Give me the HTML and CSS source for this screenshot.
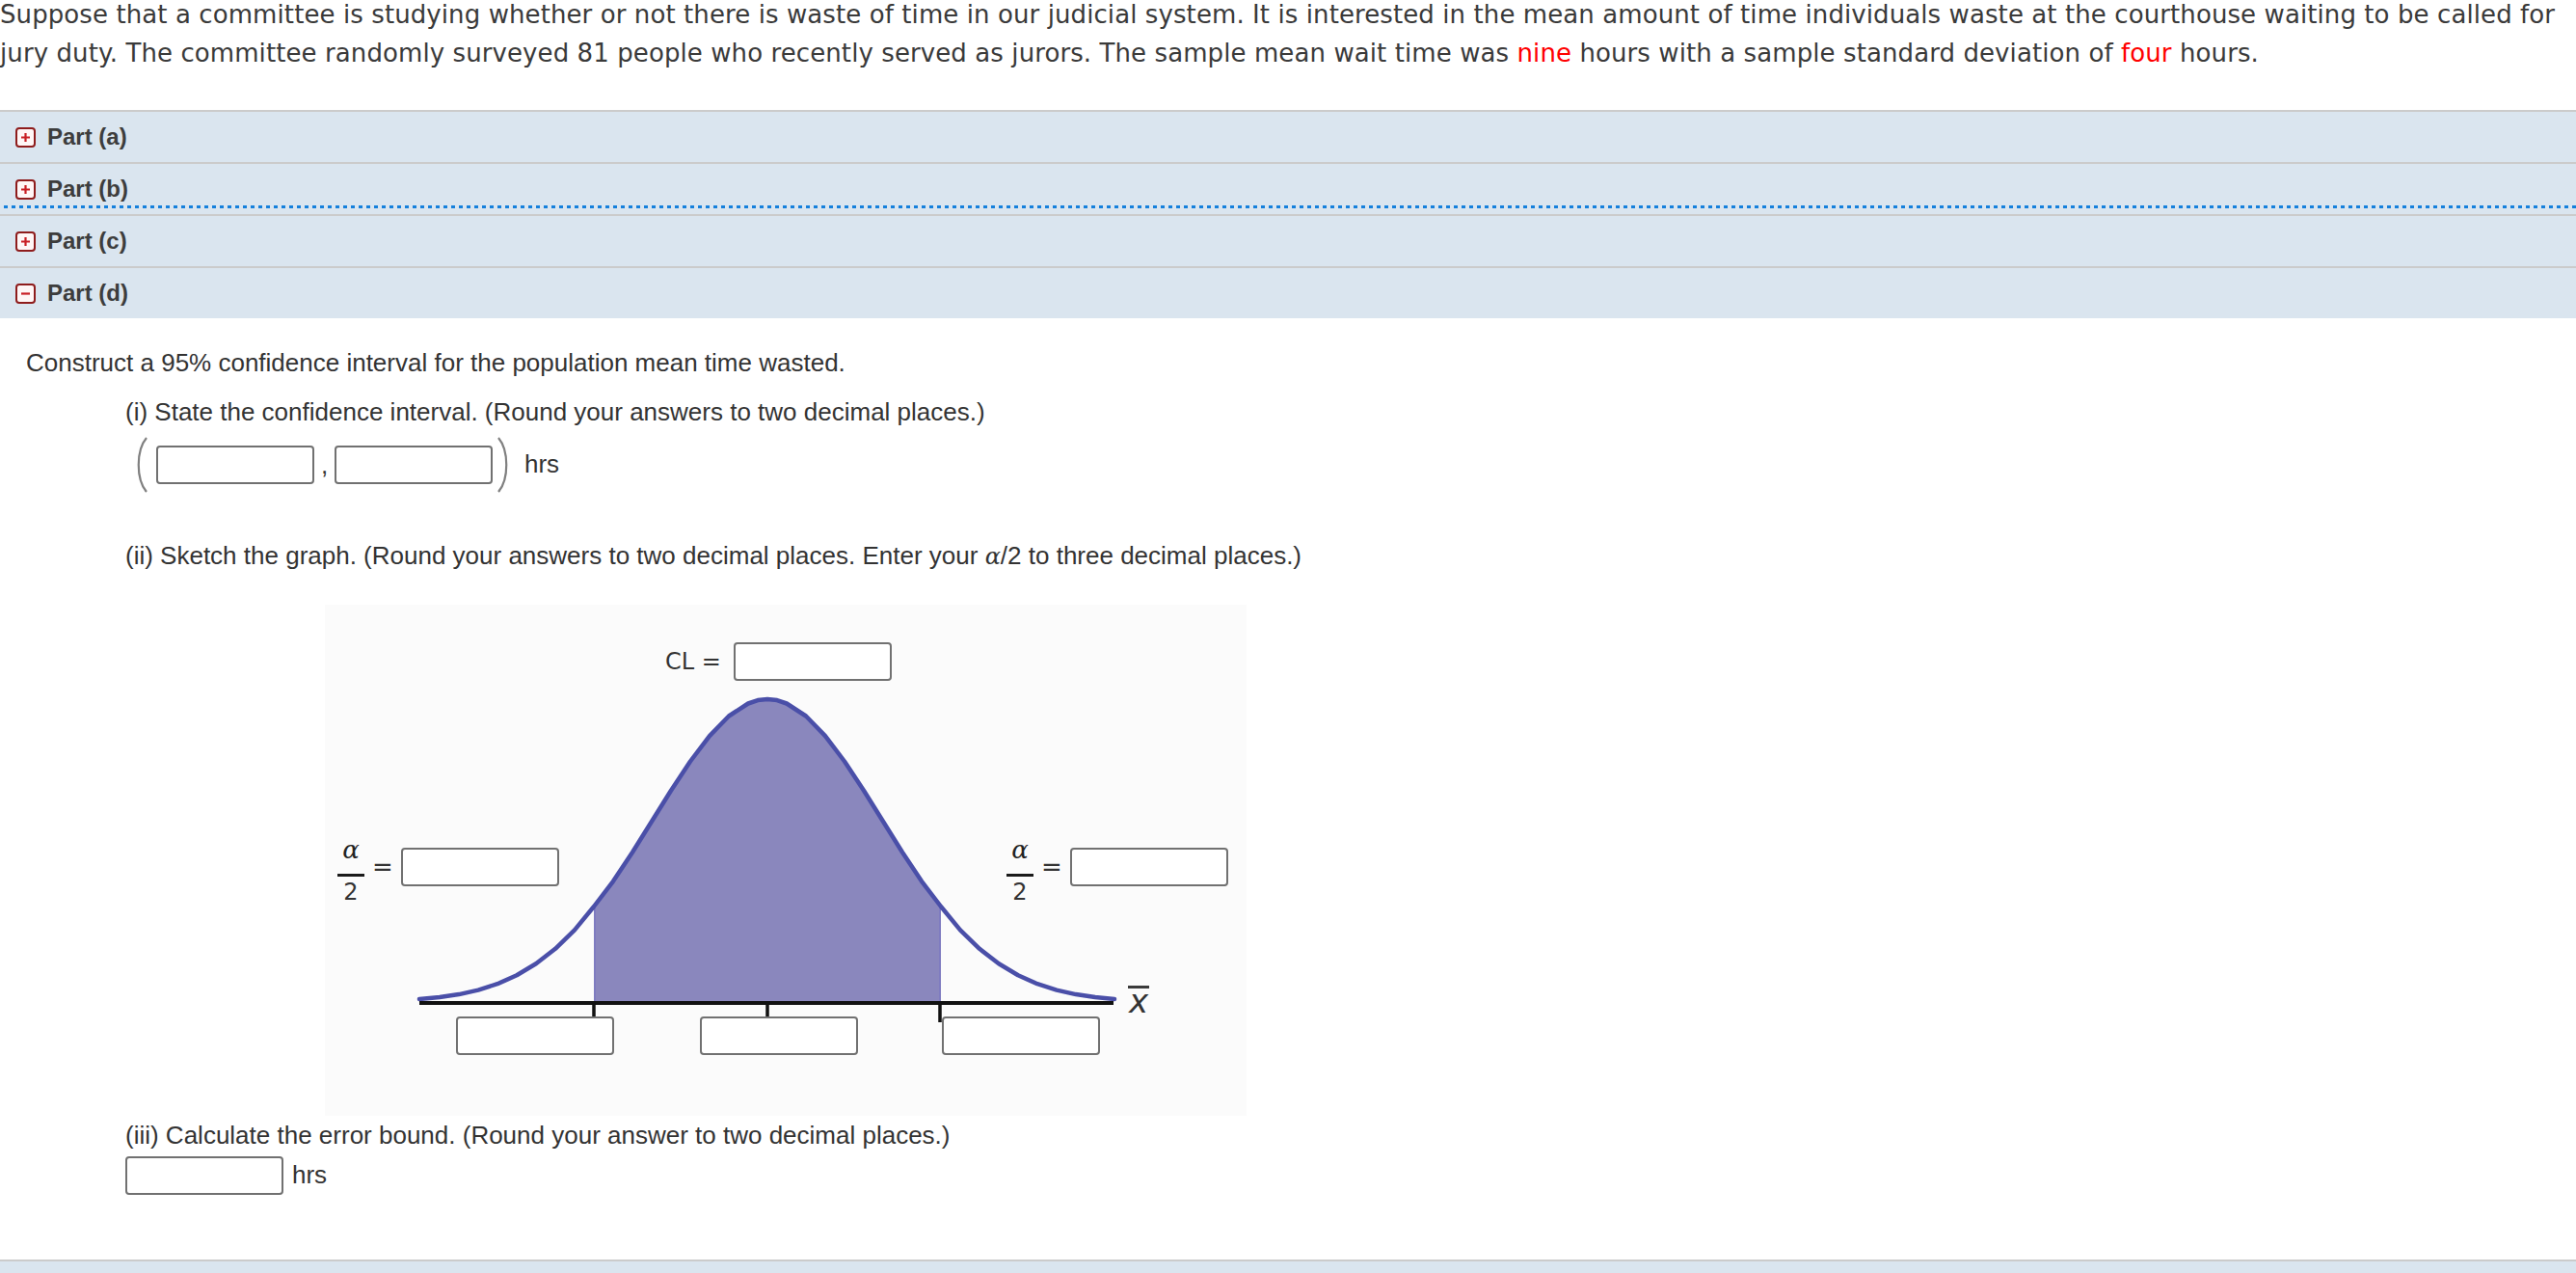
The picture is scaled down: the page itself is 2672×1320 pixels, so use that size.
FILE: index.html
```html
<!DOCTYPE html>
<html lang="en">
<head>
    <meta charset="UTF-8">
    <title>Confidence Interval Question</title>
    <link rel="stylesheet" href="styles.css">
</head>
<body>
    <p class="intro">Suppose that a committee is studying whether or not there is waste of time in our judicial system. It is interested in the mean amount of time individuals waste at the courthouse waiting to be called for<br>jury duty. The committee randomly surveyed 81 people who recently served as jurors. The sample mean wait time was <span class="given">nine</span> hours with a sample standard deviation of <span class="given">four</span> hours.</p>

    <div class="parts">
        <div class="part-head">
            <svg class="toggle" viewBox="0 0 21 21"><rect x="1" y="1" width="19" height="19" rx="3"/><path d="M10.5 6v9M6 10.5h9"/></svg>
            <span>Part (a)</span>
        </div>
        <div class="part-head focused">
            <svg class="toggle" viewBox="0 0 21 21"><rect x="1" y="1" width="19" height="19" rx="3"/><path d="M10.5 6v9M6 10.5h9"/></svg>
            <span>Part (b)</span>
        </div>
        <div class="part-head">
            <svg class="toggle" viewBox="0 0 21 21"><rect x="1" y="1" width="19" height="19" rx="3"/><path d="M10.5 6v9M6 10.5h9"/></svg>
            <span>Part (c)</span>
        </div>
        <div class="part-head">
            <svg class="toggle" viewBox="0 0 21 21"><rect x="1" y="1" width="19" height="19" rx="3"/><path d="M6 10.5h9"/></svg>
            <span>Part (d)</span>
        </div>
    </div>

    <section class="part-body">
        <p class="prompt">Construct a 95% confidence interval for the population mean time wasted.</p>

        <div class="step">
            <p>(i) State the confidence interval. (Round your answers to two decimal places.)</p>
            <div class="interval">
                <svg class="paren" viewBox="0 0 18 58"><path d="M15 1C4 14 4 44 15 57"/></svg>
                <input class="answer-box" type="text">
                <span class="comma">,</span>
                <input class="answer-box" type="text">
                <svg class="paren" viewBox="0 0 18 58"><path d="M3 1C14 14 14 44 3 57"/></svg>
                <span class="unit">hrs</span>
            </div>
        </div>

        <div class="step">
            <p>(ii) Sketch the graph. (Round your answers to two decimal places. Enter your <i class="math">&alpha;</i>/2 to three decimal places.)</p>
            <div class="graph">
                <svg class="curve" viewBox="0 0 956 530">
                    <polygon class="shade" points="279,313 299,286.8 319,256.7 339,224.8 359,192.7 379,162.5 399,136.1 419,115.5 439,102.5 449,99.1 459,98 469,99.1 479,102.5 499,115.5 519,136.1 539,162.5 559,192.7 579,224.8 599,256.7 619,286.8 639,313 639,413 279,413"/>
                    <path class="edge" d="M280 314V412M638 314V412"/>
                    <polyline class="bell" points="98,409 119,407.1 139,404.1 159,399.6 179,393.2 199,384.3 219,372.3 239,356.8 259,337.4 279,313 299,286.8 319,256.7 339,224.8 359,192.7 379,162.5 399,136.1 419,115.5 439,102.5 449,99.1 459,98 469,99.1 479,102.5 499,115.5 519,136.1 539,162.5 559,192.7 579,224.8 599,256.7 619,286.8 639,313 659,337.4 679,356.8 699,372.3 719,384.3 739,393.2 759,399.6 779,404.1 799,407.1 819,409"/>
                    <path class="axis" d="M98 413H818"/>
                    <path class="tick" d="M279 413V429M459 413V427M638 413V433"/>
                </svg>

                <div class="cl-label">
                    <span>CL =</span>
                    <input class="answer-box" type="text">
                </div>

                <div class="alpha-label left">
                    <span class="frac"><i class="num">&alpha;</i><span class="bar"></span><span class="den">2</span></span>
                    <span class="eq">=</span>
                    <input class="answer-box" type="text">
                </div>
                <div class="alpha-label right">
                    <span class="frac"><i class="num">&alpha;</i><span class="bar"></span><span class="den">2</span></span>
                    <span class="eq">=</span>
                    <input class="answer-box" type="text">
                </div>

                <div class="axis-boxes">
                    <input class="answer-box" type="text">
                    <input class="answer-box" type="text">
                    <input class="answer-box" type="text">
                </div>
                <span class="xbar">x</span>
            </div>
        </div>

        <div class="step last">
            <p>(iii) Calculate the error bound. (Round your answer to two decimal places.)</p>
            <div class="interval">
                <input class="answer-box" type="text">
                <span class="unit">hrs</span>
            </div>
        </div>
    </section>

    <div class="part-head next"></div>
</body>
</html>
```

FILE: styles.css
```css
/* Reset */
* {
    margin: 0;
    padding: 0;
    box-sizing: border-box;
}

body {
    font-family: "Liberation Sans", Arial, sans-serif;
    color: #333;
    background: #fff;
}

/* Question text */
.intro {
    font-family: "DejaVu Sans", Verdana, sans-serif;
    font-size: 26px;
    line-height: 40px;
    letter-spacing: 0.09px;
    color: #3a3a3a;
    margin-top: -5px;
    margin-bottom: 39px;
    white-space: nowrap;
}

.given {
    color: #f00;
}

/* Part headers */
.part-head {
    position: relative;
    display: flex;
    align-items: center;
    gap: 12px;
    height: 54px;
    padding-left: 16px;
    border-top: 2px solid #cbcbcb;
    background-color: #dae5ef;
    font-size: 24px;
    font-weight: bold;
    color: #3d3d3d;
}

.part-head.focused::after {
    content: "";
    position: absolute;
    left: 4px;
    right: 0;
    bottom: 6px;
    height: 3px;
    background: repeating-linear-gradient(90deg, #1580dc 0 4px, transparent 4px 8px);
}

.part-head.next {
    height: 20px;
}

.toggle {
    width: 21px;
    height: 21px;
    flex-shrink: 0;
}

.toggle rect {
    fill: #fff6f6;
    stroke: #8e1c1c;
    stroke-width: 2;
}

.toggle path {
    stroke: #c81e24;
    stroke-width: 2.2;
    fill: none;
}

/* Part (d) body */
.part-body {
    padding: 31px 0 67px 27px;
    font-size: 26px;
    line-height: 30px;
}

.step {
    margin-left: 103px;
    margin-top: 21px;
}

.step + .step {
    margin-top: 50px;
}

.step.last {
    margin-top: 5px;
}

.math {
    font-family: "DejaVu Serif", serif;
    font-size: 24px;
}

.interval {
    display: flex;
    align-items: center;
    margin-top: 11px;
}

.step.last .interval {
    margin-top: 7px;
}

.answer-box {
    width: 164px;
    height: 40px;
    border: 2px solid #717171;
    border-radius: 4px;
    background: #fff;
    font: inherit;
    padding: 0 8px;
}

.paren {
    width: 18px;
    height: 58px;
}

.paren path {
    fill: none;
    stroke: #808080;
    stroke-width: 2.2;
}

.interval .paren:first-child {
    margin: 0 7px 0 7px;
}

.comma {
    width: 21px;
    text-align: center;
}

.interval .paren:nth-last-child(2) {
    margin: 0 4px 0 3px;
}

.unit {
    margin-left: 8px;
    margin-top: -2px;
}

.step.last .unit {
    margin-left: 9px;
}

/* Graph */
.graph {
    position: relative;
    width: 956px;
    height: 530px;
    margin: 35px 0 0 207px;
    background-color: #fbfbfb;
    font-family: "DejaVu Sans", Verdana, sans-serif;
    color: #333;
}

.curve {
    position: absolute;
    top: 0;
    left: 0;
    width: 956px;
    height: 530px;
}

.shade {
    fill: #8a87bd;
}

.edge {
    stroke: #7f7cc0;
    stroke-width: 2;
}

.bell {
    fill: none;
    stroke: #4a4fa8;
    stroke-width: 4.5;
    stroke-linejoin: round;
    stroke-linecap: round;
}

.axis {
    stroke: #111;
    stroke-width: 4;
}

.tick {
    stroke: #111;
    stroke-width: 3.5;
}

.cl-label {
    position: absolute;
    left: 353px;
    top: 39px;
    display: flex;
    align-items: center;
    gap: 13px;
    font-size: 24px;
    line-height: 40px;
}

.alpha-label {
    position: absolute;
    top: 244px;
    display: flex;
    align-items: flex-start;
}

.alpha-label.left {
    left: 13px;
}

.alpha-label.right {
    left: 707px;
}

.frac {
    display: flex;
    flex-direction: column;
    align-items: center;
    width: 28px;
}

.frac .num {
    font-family: "DejaVu Serif", serif;
    font-size: 26px;
    line-height: 20px;
    color: #222;
}

.frac .bar {
    width: 28px;
    height: 3px;
    margin-top: 15px;
    background-color: #1a1a1a;
}

.frac .den {
    font-size: 24px;
    line-height: 24px;
    margin-top: 4px;
}

.eq {
    font-size: 26px;
    line-height: 40px;
    margin: 8px 8px 0 8px;
}

.alpha-label .answer-box {
    margin-top: 8px;
}

.axis-boxes {
    position: absolute;
    left: 136px;
    top: 427px;
    display: flex;
    gap: 89px;
}

.axis-boxes .answer-box:last-child {
    margin-left: -2px;
}

.xbar {
    position: absolute;
    left: 833px;
    top: 395px;
    font-size: 34px;
    font-style: italic;
    line-height: 26px;
    border-top: 3px solid #3a3a3a;
    padding: 0 1px;
    color: #333;
}
```
